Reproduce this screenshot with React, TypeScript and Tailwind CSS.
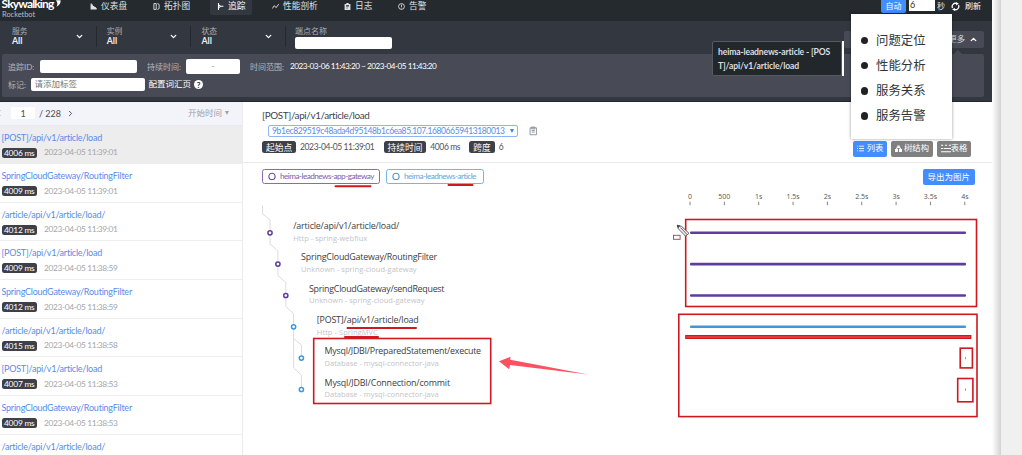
import React from 'react';
import { ChevronDown, ChevronLeft, ChevronRight, ChevronUp } from 'lucide-react';

const traces = [
    { name: '[POST]/api/v1/article/load', duration: 4006, time: '11:39:01' },
    { name: 'SpringCloudGateway/RoutingFilter', duration: 4009, time: '11:39:01' },
    { name: '/article/api/v1/article/load/', duration: 4012, time: '11:39:01' },
    { name: '[POST]/api/v1/article/load', duration: 4009, time: '11:38:59' },
    { name: 'SpringCloudGateway/RoutingFilter', duration: 4012, time: '11:38:59' },
    { name: '/article/api/v1/article/load/', duration: 4015, time: '11:38:58' },
    { name: '[POST]/api/v1/article/load', duration: 4007, time: '11:38:53' },
    { name: 'SpringCloudGateway/RoutingFilter', duration: 4009, time: '11:38:53' },
    { name: '/article/api/v1/article/load/' },
];

const PURPLE = '#5f3d9c';
const BLUE = '#3f96d9';

// width is the rendered length of the label in the chart
const spans = [
    { name: '/article/api/v1/article/load/', width: 106, layer: 'Http - spring-webflux', layerWidth: 74, x: 270, y: 232.3, color: PURPLE },
    { name: 'SpringCloudGateway/RoutingFilter', width: 136, layer: 'Unknown - spring-cloud-gateway', layerWidth: 115.5, x: 277.9, y: 263.6, color: PURPLE },
    { name: 'SpringCloudGateway/sendRequest', width: 135.5, layer: 'Unknown - spring-cloud-gateway', layerWidth: 115.5, x: 285.8, y: 295, color: PURPLE },
    { name: '[POST]/api/v1/article/load', width: 102, layer: 'Http - SpringMVC', layerWidth: 61, x: 293.6, y: 326.3, color: BLUE },
    { name: 'Mysql/JDBI/PreparedStatement/execute', width: 156.5, layer: 'Database - mysql-connector-java', layerWidth: 114, x: 301.4, y: 357.6, color: BLUE },
    { name: 'Mysql/JDBI/Connection/commit', width: 125.5, layer: 'Database - mysql-connector-java', layerWidth: 114, x: 301.4, y: 389, color: BLUE },
];

const ticks = ['0', '500', '1s', '1.5s', '2s', '2.5s', '3s', '3.5s', '4s'];

const navIcons: Record<string, React.JSX.Element> = {
    dashboard: (
        <path d="M1 1v10h10.500V8.500H10V7H7.500V5H5V2.500H3V1z" fill="currentColor" />
    ),
    topology: (
        <path d="M5.500 1H1.500v10h4zM7.500 1q3 0 3 2.500v5q0 2.500-3 2.500" fill="none" stroke="currentColor" strokeWidth="1.600" />
    ),
    trace: (
        <path d="M2.500 0v12M2.500 9l3.500-3.500h5M6 5.500L2.500 3" fill="none" stroke="currentColor" strokeWidth="1.800" />
    ),
    profile: (
        <path d="M.5 9.500l3.500-5 3 3.500L11.500 2" fill="none" stroke="currentColor" strokeWidth="1.600" />
    ),
    log: (
        <path
            d="M1 1.500h3V0h4v1.500h3V12H1zM3.500 4v1h5V4zm0 2v1h5V6zm0 2v1h3.500V8z"
            fill="currentColor"
            fillRule="evenodd"
        />
    ),
    alarm: (
        <g fill="none" stroke="currentColor" strokeWidth="1.500">
            <circle cx="6" cy="6" r="5" />
            <path d="M6 2.800v4M6 8v1.300" />
        </g>
    ),
};

const NavItem = ({
    icon,
    label,
    className,
}: {
    icon: string;
    label: string;
    className: string;
}): React.JSX.Element => (
    <div className={`flex h-[15px] shrink-0 items-center gap-[4px] pb-[3px] text-[8.7px] leading-none ${className}`}>
        <svg viewBox="0 0 12 12" className="size-[7px]">
            {navIcons[icon]}
        </svg>
        <span className="whitespace-nowrap">{label}</span>
    </div>
);

const NavBar = (): React.JSX.Element => (
    <nav className="flex h-[21px] items-start bg-[#252a2f] text-[#dfe1e4]">
        <div className="relative h-[21px] w-[90px] shrink-0">
            <div className="-mt-[3px] ml-[1.500px] text-[12px] leading-[13px] font-bold tracking-[-0.85px] text-white">
                Skywalking
            </div>
            <div className="ml-[2px] text-[7.500px] leading-[9px] tracking-[-0.05px] text-[#b9bcc0]">
                Rocketbot
            </div>
            <svg viewBox="0 0 6 8" className="absolute top-0 left-[56px] h-[7px] w-[5px]">
                <path d="M0 0h5.500q.5 5-5 8 2.500-4-.5-8z" fill="#fff" />
            </svg>
        </div>
        <NavItem icon="dashboard" label="仪表盘" className="w-[63px]" />
        <NavItem icon="topology" label="拓扑图" className="w-[57px]" />
        <NavItem icon="trace" label="追踪" className="w-[42px] rounded-b-[2px] bg-[#333840] pl-[7px] text-white" />
        <NavItem icon="profile" label="性能剖析" className="w-[92px] pl-[20px]" />
        <NavItem icon="log" label="日志" className="w-[54px]" />
        <NavItem icon="alarm" label="告警" className="w-[60px]" />
        <div className="ml-auto flex items-start pr-[11px] text-[8px] leading-[12px]">
            <span className="mr-[3px] h-[13px] w-[25px] rounded-b-[2px] bg-[#448dfe] text-center text-white">
                自动
            </span>
            <span className="mr-[2px] h-[11px] w-[26px] bg-white pl-px text-[9px] leading-[10px] text-[#333]">
                6
            </span>
            <span className="mr-[6px]">秒</span>
            <svg viewBox="0 0 12 12" className="mt-[1.500px] mr-[5px] size-[9px]">
                <path
                    d="M2 8a4.400 4.400 0 0 1 5.500-6M10 4a4.400 4.400 0 0 1-5.500 6"
                    fill="none"
                    stroke="#fff"
                    strokeWidth="1.700"
                />
                <path d="M6.500 0l4 2-3.500 2.500zM5.500 12l-4-2L5 7.500z" fill="#fff" />
            </svg>
            <span className="text-white">刷新</span>
        </div>
    </nav>
);

const FilterSelect = ({ label }: { label: string }): React.JSX.Element => (
    <div className="flex h-[21px] w-[94.700px] items-center border-r border-[#24292e] pl-[10px]">
        <div className="flex flex-1 flex-col">
            <span className="text-[7.8px] leading-[10px] text-[#a9adb3]">{label}</span>
            <span className="text-[8.800px] leading-[10px] font-bold text-[#eceef0]">All</span>
        </div>
        <ChevronDown className="mr-[12px] size-[9px] text-white" strokeWidth={3.500} />
    </div>
);

const FilterBar = (): React.JSX.Element => (
    <section className="h-[81px] border-b border-[#23272d] bg-[#333840]">
        <div className="flex h-[33px] items-start pt-[4.500px] pr-[8px] pl-[2px]">
            <FilterSelect label="服务" />
            <FilterSelect label="实例" />
            <FilterSelect label="状态" />
            <div className="pl-[9px]">
                <div className="text-[8px] leading-[11px] text-[#a9adb3]">端点名称</div>
                <div className="h-[12.500px] w-[97px] rounded-[2px] bg-white" />
            </div>
            <div className="mt-[5.500px] ml-auto flex h-[17px] w-[140px] items-center justify-end rounded-[2px] bg-[#484b55] pr-[6px] text-[8.300px] text-[#d5d7da]">
                更多
                <ChevronUp className="ml-[4px] size-[9px] text-white" strokeWidth={3.500} />
            </div>
        </div>
        <div className="relative mr-[8px] ml-[2px] flex h-[43px] flex-col rounded-[2px] bg-[#484b55] px-[6px] pt-[5px] text-[8px] text-[#b4b7bd]">
            <div className="absolute -top-[4px] right-[22px] border-x-[4px] border-b-[4px] border-x-transparent border-b-[#484b55]" />
            <div className="flex h-[15px] items-center">
                <span className="w-[32px] whitespace-nowrap">追踪ID:</span>
                <span className="h-[12.500px] w-[97px] rounded-[2px] bg-white" />
                <span className="ml-[10px] w-[39px] whitespace-nowrap">持续时间:</span>
                <span className="h-[15px] w-[54px] rounded-[2px] bg-white text-center leading-[14px] text-[#888]">
                    -
                </span>
                <span className="ml-[10px] w-[40px] whitespace-nowrap">时间范围:</span>
                <span className="text-[8.200px] tracking-[-0.49px] whitespace-nowrap text-white">
                    2023-03-06 11:43:20 ~ 2023-04-05 11:43:20
                </span>
            </div>
            <div className="mt-[4px] flex h-[13px] items-center">
                <span className="w-[22.500px]">标记:</span>
                <span className="h-[13px] w-[114.500px] rounded-[2px] bg-white pl-[4px] text-[8.500px] leading-[13px] text-[#777]">
                    请添加标签
                </span>
                <span className="ml-[3.500px] text-[8.500px] text-white">配置词汇页</span>
                <span className="ml-[3px] flex size-[9px] items-center justify-center rounded-full bg-white text-[8px] leading-none font-black text-[#333840]">
                    ?
                </span>
            </div>
        </div>
    </section>
);

const TraceList = (): React.JSX.Element => (
    <aside className="h-[353px] w-[243px] shrink-0 overflow-hidden border-r border-[#ececee]">
        <div className="flex h-[23.500px] items-center border-b border-[#e9eaf0] bg-[#f3f4f9] text-[9px] text-[#4b4e57]">
            <ChevronLeft className="-ml-[5px] size-[8px]" strokeWidth={2.500} />
            <span className="ml-[8px] h-[12px] w-[24px] bg-white text-center leading-[13px]">1</span>
            <span className="ml-[4px] w-[27px]">/ 228</span>
            <ChevronRight className="size-[9px]" strokeWidth={2.500} />
            <span className="ml-auto text-[8.500px] text-[#9da2ab]">开始时间</span>
            <span className="mr-[13px] ml-[3px] border-x-[2.500px] border-t-[4px] border-x-transparent border-t-[#9da2ab]" />
        </div>
        {traces.map((trace, i) => (
            <div
                key={i}
                className={`h-[38.650px] border-b border-[#eeeeef] pt-[6px] pl-[1.500px] ${i === 0 ? 'bg-[#ededed]' : 'bg-white'}`}
            >
                <div className="text-[9px] leading-[12px] tracking-[-0.23px] text-[#5b8bea]">{trace.name}</div>
                {trace.duration && (
                    <div className="mt-[4px] flex h-[10px] items-center text-[8.400px]">
                        <span className="mr-[7px] h-[10px] w-[35.500px] rounded-[2.500px] bg-[#3d4048] text-center leading-[10px] tracking-[-0.22px] text-white">
                            {trace.duration} ms
                        </span>
                        <span className="tracking-[-0.37px] text-[#a3a6ab]">2023-04-05 {trace.time}</span>
                    </div>
                )}
            </div>
        ))}
    </aside>
);

const Tag = ({ children }: { children: React.ReactNode }): React.JSX.Element => (
    <span className="flex h-[12px] shrink-0 items-center rounded-[2.500px] bg-[#3d4048] px-[4px] text-[8.700px] tracking-normal text-white">
        {children}
    </span>
);

const TraceHeader = (): React.JSX.Element => (
    <header className="flex h-[60.500px] items-end border-b border-[#e9e9eb] pr-[21px] pl-[19px]">
        <div className="flex-1 self-start pt-[7px]">
            <h1 className="text-[9.900px] leading-[13px] tracking-[-0.36px] text-[#3d444f]">[POST]/api/v1/article/load</h1>
            <div className="mt-[3px] flex items-center">
                <div className="ml-[6px] flex h-[12px] w-[250px] shrink-0 items-center justify-between rounded-[2px] border border-[#8db4f5] px-[3px] text-[8.500px] text-[#5b8bea]">
                    <span className="tracking-[-0.4px] whitespace-nowrap">
                        9b1ec829519c48ada4d95148b1c6ea85.107.16806659413180013
                    </span>
                    <span className="border-x-[2.500px] border-t-[4px] border-x-transparent border-t-[#4580e8]" />
                </div>
                <svg viewBox="0 0 16 18" className="ml-[11px] h-[10px] w-[8.500px] text-[#8b8f99]">
                    <path d="M2 3h12v13H2zM5 1.500h6V5H5zM5 8h6M5 11h6" fill="none" stroke="currentColor" strokeWidth="1.700" />
                </svg>
            </div>
            <div className="mt-[4px] flex items-center text-[8.500px] tracking-[-0.4px] text-[#4e535d]">
                <Tag>起始点</Tag>
                <span className="ml-[4px] w-[83.500px] whitespace-nowrap">2023-04-05 11:39:01</span>
                <Tag>持续时间</Tag>
                <span className="ml-[4px] w-[39px]">4006 ms</span>
                <Tag>跨度</Tag>
                <span className="ml-[4px]">6</span>
            </div>
        </div>
        <div className="mb-[5px] flex gap-[4px] text-[8.300px] text-white">
            <span className="flex h-[16px] w-[34px] items-center justify-center gap-[3px] rounded-[2px] bg-[#448dfe]">
                <svg viewBox="0 0 12 12" className="size-[7px]">
                    <path d="M0 2h1.500M3.500 2H12M0 6h1.500M3.500 6H12M0 10h1.500M3.500 10H12" stroke="#fff" strokeWidth="1.500" />
                </svg>
                列表
            </span>
            <span className="flex h-[16px] w-[42px] items-center justify-center gap-[2px] rounded-[2px] bg-[#808080]">
                <svg viewBox="0 0 12 12" className="size-[7px]">
                    <path d="M4 1h4v4H4zM0 7h5v5H0zM7 7h5v5H7zM3 4h2L3 8H1zM7 4h2l2 4H9z" fill="#fff" />
                </svg>
                树结构
            </span>
            <span className="flex h-[16px] w-[34px] items-center justify-center rounded-[2px] bg-[#808080]">
                <svg viewBox="0 0 14 12" className="h-[9px] w-[10px]">
                    <path d="M0 1.500h3M5.500 1.500h3M11 1.500h3M0 6h3M4 6h10M0 10.500h14" stroke="#fff" strokeWidth="1.500" />
                </svg>
                表格
            </span>
        </div>
    </header>
);

const ServiceLegend = (): React.JSX.Element => (
    <div className="flex h-[29px] items-start gap-[6px] pt-[6px] pr-[17.500px] pl-[19px] text-[8.200px] tracking-[-0.53px]">
        <span className="flex h-[15px] w-[118px] items-center gap-[4px] rounded-[2.500px] border border-[#8d68b5] pl-[5px] whitespace-nowrap text-[#805cb0]">
            <svg viewBox="0 0 8 8" className="size-[8px] shrink-0">
                <circle cx="4" cy="4.400" r="3.100" fill="none" stroke="#6b49a1" strokeWidth="1.100" />
            </svg>
            heima-leadnews-app-gateway
        </span>
        <span className="flex h-[15px] w-[98px] items-center gap-[4px] rounded-[2.500px] border border-[#74b4e8] pl-[5px] whitespace-nowrap text-[#61a6e0]">
            <svg viewBox="0 0 8 8" className="size-[8px] shrink-0">
                <circle cx="4" cy="4.400" r="3.100" fill="none" stroke="#3f96d9" strokeWidth="1.100" />
            </svg>
            heima-leadnews-article
        </span>
        <span className="ml-auto h-[16px] w-[51.500px] rounded-[2px] bg-[#448dfe] text-center text-[8.500px] leading-[16px] tracking-normal text-white">
            导出为图片
        </span>
    </div>
);

// The viewBox keeps page coordinates so spans and ticks share one scale.
const SpanChart = (): React.JSX.Element => (
    <svg
        viewBox="243 191.5 749 263.5"
        className="block h-[263.500px] w-[749px] font-['Open_Sans','Noto_Sans_CJK_SC',sans-serif]"
    >
        <g fontSize="7" fill="#555" textAnchor="middle">
            {ticks.map((tick, i) => (
                <g key={tick}>
                    <text x={690 + i * 34.35} y="198">
                        {tick}
                    </text>
                    <path d={`M${690 + i * 34.35} 201.2v3.500`} stroke="#666" strokeWidth=".8" />
                </g>
            ))}
        </g>
        <path
            d="M262.500 205v8l7.500 6.500v24l7.900 7v24.500l7.900 7V306l7.800 7v54.500l7.800 7V389M293.600 338l7.800 6.500v13"
            fill="none"
            stroke="#dcdcdf"
            strokeWidth="1"
        />
        {spans.map((span, i) => (
            <g key={i}>
                <circle cx={span.x} cy={span.y} r="2.100" fill="#fff" stroke={span.color} strokeWidth="1.500" />
                <text x={span.x + 23.2} y={span.y - 3.800} fontSize="8.900" fill="#3b3d42" textLength={span.width}>
                    {span.name}
                </text>
                <text x={span.x + 23.2} y={span.y + 7.900} fontSize="7.500" fill="#c4c4c8" textLength={span.layerWidth}>
                    {span.layer}
                </text>
                {i < 4 ? (
                    <rect x="690" y={span.y - 1.300} width="276" height="2.600" rx="1" fill={span.color} />
                ) : (
                    <rect x="965" y={span.y - 1.200} width=".8" height="2.400" fill={span.color} />
                )}
            </g>
        ))}
    </svg>
);

// Hand-drawn marks laid over the whole page.
const Annotations = (): React.JSX.Element => (
    <svg viewBox="0 0 1022 455" className="pointer-events-none absolute inset-0 h-[455px] w-[1022px]">
        <g stroke="#cf1820" strokeWidth="2" strokeLinecap="round">
            <path d="M335.500 186.200h35M448.500 185h24M347.500 328h68.500M345 337h33" />
        </g>
        <g fill="none" stroke="#cf1820" strokeWidth="1.600">
            <rect x="313.700" y="338.500" width="177" height="65" />
            <rect x="685.700" y="219.500" width="290.800" height="87" />
            <rect x="678.800" y="314.300" width="298.200" height="102.300" />
            <rect x="685.800" y="335.600" width="285" height="2.800" fill="#ee4248" strokeWidth="1.200" />
            <rect x="960.200" y="348.200" width="12.200" height="19.700" />
            <rect x="957.700" y="378.500" width="15.200" height="23.300" />
        </g>
        <path d="M499 361.300l11.500-4.600-.3 3L588 374.400l-78-9.500-.8 4.300z" fill="#ff5062" />
        <g stroke="#444" strokeWidth=".8">
            <path d="M677.300 225.300l1 3.500 7.200 7.300 3.500-2.800-7.500-7z" fill="#eee" />
            <path d="M680.500 227.500l6.500 7" />
            <path d="M677.300 225.300l2.500 .7-1.800 1.500z" fill="#444" />
        </g>
        <rect x="673.500" y="235.300" width="6.600" height="4" fill="#fff" stroke="#8e4a58" strokeWidth=".9" />
    </svg>
);

const Topics = (): React.JSX.Element => (
    <ul className="absolute top-[14px] left-[850.500px] flex h-[124.500px] w-[101px] flex-col bg-white pt-[14px] pl-[10px] text-[12.400px] leading-[25.150px] text-[#333] shadow-[0_0_3px_rgba(0,0,0,0.4)]">
        {['问题定位', '性能分析', '服务关系', '服务告警'].map((topic) => (
            <li key={topic} className="flex items-center gap-[8px]">
                <span className="size-[7.500px] rounded-full bg-[#222]" />
                {topic}
            </li>
        ))}
    </ul>
);

export default function App(): React.JSX.Element {
    return (
        <div className="relative flex h-[455px] w-[1022px] overflow-hidden bg-white font-['Lato','Noto_Sans_CJK_SC',sans-serif] [font-variant-ligatures:none]">
            <main className="w-[992px] shrink-0">
                <NavBar />
                <FilterBar />
                <div className="flex">
                    <TraceList />
                    <div className="w-[749px]">
                        <TraceHeader />
                        <ServiceLegend />
                        <SpanChart />
                    </div>
                </div>
            </main>
            <div className="w-[9px] bg-linear-to-r from-white to-[#d2d2d2]" />
            <div className="flex-1 bg-[#f0f0f0]" />
            <div className="absolute top-[41px] left-[712px] h-[35px] w-[132px] border-r-2 border-white">
                <div className="h-full rounded-[2px] border border-[#555a60] bg-[#22272c] pt-[3px] pl-[5px] text-[8.600px] leading-[14px] font-bold tracking-[-0.15px] whitespace-nowrap text-[#dcdee1]">
                    heima-leadnews-article - [POS
                    <br />
                    T]/api/v1/article/load
                </div>
            </div>
            <Topics />
            <Annotations />
        </div>
    );
}
